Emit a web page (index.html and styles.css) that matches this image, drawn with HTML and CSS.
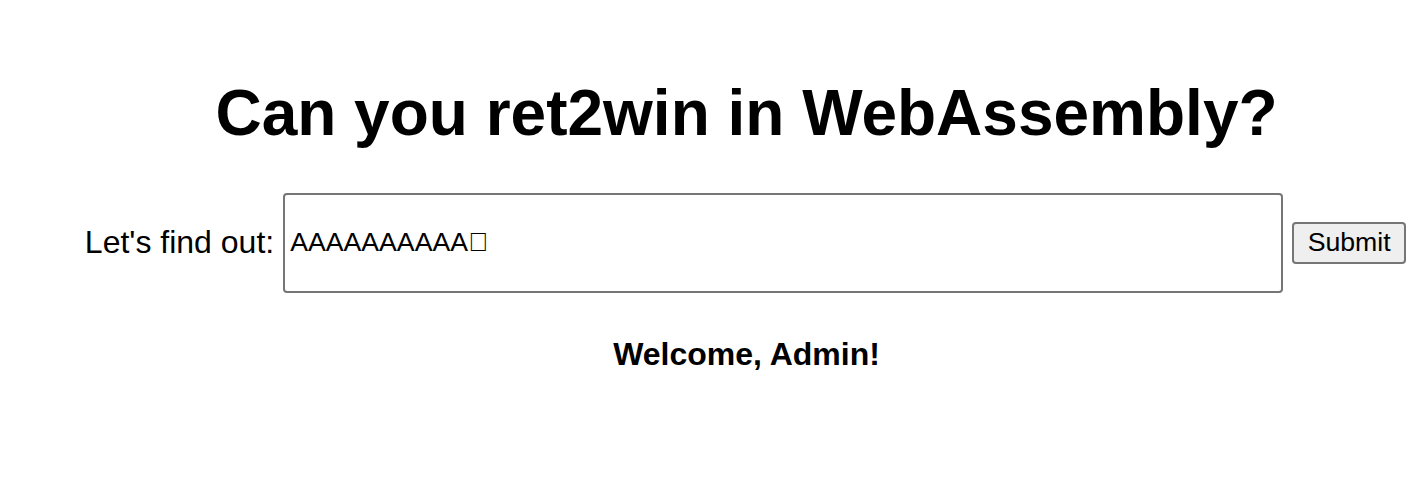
FILE: index.html
```html
<!DOCTYPE html>
<html lang="en">
<head>
<meta charset="utf-8">
<title>ret2win</title>
<link rel="stylesheet" href="styles.css">
</head>
<body>
<div class="page">
  <h1 class="title">Can you ret2win in WebAssembly?</h1>
  <form class="row">
    <label class="label" for="name">Let's find out:</label>
    <input class="field" id="name" type="text" value="AAAAAAAAAA&#xE000;">
    <button class="submit" type="button">Submit</button>
  </form>
  <p class="welcome">Welcome, Admin!</p>
</div>
</body>
</html>
```
FILE: styles.css
```css
html, body {
  margin: 0;
  padding: 0;
  background: #ffffff;
}
body {
  font-family: "Liberation Sans", Arial, sans-serif;
  color: #000000;
}
.page {
  box-sizing: border-box;
  width: 1412px;
  padding-left: 79px;
  display: flex;
  flex-direction: column;
  align-items: center;
}
.title {
  font-size: 64px;
  font-weight: bold;
  line-height: 1.15;
  margin: 77px 0 42px 2px;
  white-space: nowrap;
}
.row {
  display: flex;
  align-items: center;
  gap: 9px;
  margin: 0;
}
.label {
  font-size: 32px;
  line-height: 1.15;
}
.field {
  box-sizing: border-box;
  width: 1000px;
  height: 100px;
  border: 2px solid #767676;
  border-radius: 4px;
  padding: 0 5px;
  font-family: "Liberation Sans", Arial, sans-serif;
  font-size: 26.67px;
  color: #000000;
  background: #ffffff;
  outline: none;
}
.submit {
  box-sizing: border-box;
  width: 114px;
  height: 42px;
  border: 2px solid #767676;
  border-radius: 4px;
  background: #efefef;
  font-family: "Liberation Sans", Arial, sans-serif;
  font-size: 26.67px;
  color: #000000;
  padding: 0;
}
.welcome {
  font-size: 32px;
  font-weight: bold;
  line-height: 1.15;
  margin: 43px 0 0 2px;
}
```
